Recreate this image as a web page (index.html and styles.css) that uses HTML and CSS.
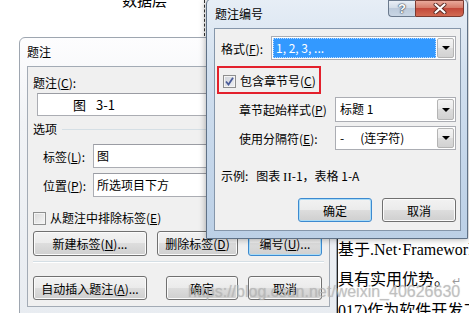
FILE: index.html
```html
<!DOCTYPE html>
<html>
<head>
    <meta charset="UTF-8">
    <meta name="viewport" content="width=device-width, initial-scale=1.0">
    <title>题注编号</title>
    <link rel="stylesheet" href="styles.css">
</head>
<body>
    <div class="desk">
        <!-- the Word document behind the dialogs -->
        <div class="doc-title">数据层</div>
        <div class="doc-dash"></div>
        <div class="doc-rule"></div>
        <div class="doc-text">
            <p>基于.Net·Framework</p>
            <p>具有实用优势。<span class="mark">↵</span></p>
            <p>017)作为软件开发工具</p>
        </div>

        <!-- 题注 dialog -->
        <div class="window win-caption">
            <div class="titlebar">题注</div>
            <div class="client">
                <div class="cap-label">题注(<u>C</u>):</div>
                <div class="textbox cap-box">图<span class="cap-num">3-1</span></div>
                <div class="group">选项<span class="group-line"></span></div>
                <div class="field">
                    <span class="field-label">标签(<u>L</u>):</span>
                    <div class="textbox">图</div>
                </div>
                <div class="field field-pos">
                    <span class="field-label">位置(<u>P</u>):</span>
                    <div class="textbox">所选项目下方</div>
                </div>
                <div class="check check-exclude">
                    <span class="box"></span>
                    <span>从题注中排除标签(<u>E</u>)</span>
                </div>
                <div class="btn-row">
                    <button class="btn w-wide">新建标签(<u>N</u>)...</button>
                    <button class="btn w-del">删除标签(<u>D</u>)</button>
                    <button class="btn w-std def">编号(<u>U</u>)...</button>
                </div>
                <div class="sep"></div>
                <div class="btn-row btn-row-last">
                    <button class="btn w-wide">自动插入题注(<u>A</u>)...</button>
                    <button class="btn w-ok">确定</button>
                    <button class="btn w-std">取消</button>
                </div>
            </div>
        </div>

        <!-- 题注编号 dialog -->
        <div class="window win-number">
            <div class="titlebar">题注编号</div>
            <div class="caption-btns">
                <div class="cb-help">?</div>
                <div class="cb-close">
                    <svg width="14" height="11" viewBox="0 0 14 11">
                        <path d="M2.5 1.5 L11.5 9.5 M11.5 1.5 L2.5 9.5" stroke="#5a2a24" stroke-width="4" stroke-linecap="round"/>
                        <path d="M2.5 1.5 L11.5 9.5 M11.5 1.5 L2.5 9.5" stroke="#fff" stroke-width="2.2" stroke-linecap="round"/>
                    </svg>
                </div>
            </div>
            <div class="client">
                <div class="row row-fmt">
                    <span class="row-label">格式(<u>F</u>):</span>
                    <div class="combo combo-fmt">
                        <div class="combo-value selected">1, 2, 3, ...</div>
                        <div class="combo-arrow"><i></i></div>
                    </div>
                </div>
                <div class="mark-box">
                    <div class="check">
                        <span class="box checked">
                            <svg width="11" height="11" viewBox="0 0 11 11">
                                <path d="M2 5.5 L4.5 8.5 L9 1.8" fill="none" stroke="#4a5c99" stroke-width="1.8"/>
                            </svg>
                        </span>
                        <span>包含章节号(<u>C</u>)</span>
                    </div>
                </div>
                <div class="row row-sub row-style">
                    <span class="row-label sub-label">章节起始样式(<u>P</u>)</span>
                    <div class="combo combo-sub">
                        <div class="combo-value">标题 1</div>
                        <div class="combo-arrow"><i></i></div>
                    </div>
                </div>
                <div class="row row-sub row-sepr">
                    <span class="row-label sub-label">使用分隔符(<u>E</u>):</span>
                    <div class="combo combo-sub">
                        <div class="combo-value">-<span class="dash-name">(连字符)</span></div>
                        <div class="combo-arrow"><i></i></div>
                    </div>
                </div>
                <div class="sample">示例:<span class="sample-text">图表 <span class="roman">II</span>-1，表格 1-A</span></div>
                <div class="btn-row btn-row-right">
                    <button class="btn w-std def">确定</button>
                    <button class="btn w-std">取消</button>
                </div>
            </div>
        </div>

        <div class="watermark">https://blog.csdn.net/weixin_40626630</div>
    </div>
</body>
</html>
```

FILE: styles.css
```css
* {
    box-sizing: border-box;
}
body {
    margin: 0;
    overflow: hidden;
    background: #fff;
    font-family: "Noto Sans CJK SC", sans-serif;
    font-size: 12px;
    color: #000;
}
.desk {
    position: relative;
    width: 469px;
    height: 313px;
    overflow: hidden;
}
u {
    text-decoration: underline;
    text-underline-offset: 1px;
}

/* document behind */
.doc-title {
    position: absolute;
    left: 122px;
    top: -7px;
    font: 15px/16px "Liberation Serif", "Noto Sans CJK SC", serif;
}
.doc-dash {
    position: absolute;
    left: 204px;
    top: 0;
    height: 36px;
    border-left: 1px dashed #333;
}
.doc-rule {
    position: absolute;
    left: 337px;
    top: 200px;
    bottom: 0;
    border-left: 1px solid #222;
}
.doc-text {
    position: absolute;
    left: 338px;
    top: 235px;
    font: 16px/30px "Liberation Serif", "Noto Sans CJK SC", serif;
    white-space: nowrap;
}
.doc-text p {
    margin: 0;
}
.mark {
    color: #999;
    font-size: 11px;
    margin-left: 2px;
}

/* windows */
.window {
    position: absolute;
    display: flex;
    flex-direction: column;
    border: 1px solid #7d8794;
    border-radius: 6px 6px 0 0;
}
.win-caption {
    left: 19px;
    top: 37px;
    width: 318px;
    height: 284px;
    background: linear-gradient(#fdfdfe, #f1f3f6 30%, #e8ecf1);
    border-color: #9ea6b0;
}
.win-number {
    left: 206px;
    top: -2px;
    width: 262px;
    height: 241px;
    background: linear-gradient(180deg, #e7eef6, #d2e0ef 30%, #c4d6ea 70%, #bcd0e6);
    border-color: #5f7186;
    box-shadow: 0 0 7px rgba(0, 0, 0, 0.35);
}
.titlebar {
    height: 28px;
    line-height: 28px;
    padding-left: 7px;
    white-space: nowrap;
}
.win-number .titlebar {
    height: 29px;
    line-height: 29px;
    padding-left: 8px;
}
.client {
    background: #f0f0f0;
    border: 1px solid #a3abb5;
    display: flex;
    flex-direction: column;
}
.win-caption .client {
    margin: 0 6px 0 7px;
    padding: 0 5px;
    height: 241px;
}
.win-number .client {
    margin: 0 6px 0 7px;
    padding: 0 4px 0 6px;
    height: 203px;
    border-color: #8596aa;
}

/* caption buttons */
.caption-btns {
    position: absolute;
    top: 1px;
    right: 3px;
    display: flex;
}
.cb-help,
.cb-close {
    height: 17px;
    display: flex;
    align-items: center;
    justify-content: center;
    border: 1px solid #6b7a8d;
}
.cb-help {
    width: 27px;
    border-right: none;
    border-radius: 0 0 0 4px;
    background: linear-gradient(#e9eff6, #d3dde8 45%, #bccadb 50%, #c9d6e4);
    color: #fff;
    font: bold 13px/1 "Liberation Sans", sans-serif;
    text-shadow: 0 0 1px #3d4a5a, 0 0 1px #3d4a5a, 0 0 2px #3d4a5a;
}
.cb-close {
    width: 49px;
    border-color: #7b3a30;
    border-radius: 0 0 4px 0;
    background: linear-gradient(#e9a99b, #d67b69 45%, #c3493a 50%, #d26a52);
}

/* form parts */
.textbox {
    flex: none;
    height: 24px;
    line-height: 22px;
    background: #fff;
    border: 1px solid #abadb3;
    border-top-color: #9a9ca3;
    padding-left: 3px;
    white-space: nowrap;
}
.cap-label {
    margin-top: 8px;
    line-height: 16px;
}
.cap-box {
    margin: 2px 0 0 4px;
    width: 300px;
    height: 23px;
    line-height: 21px;
    padding-left: 35px;
    font-size: 13px;
}
.cap-num {
    margin-left: 10px;
}
.group {
    display: flex;
    align-items: center;
    margin-top: 5px;
    line-height: 16px;
}
.group-line {
    flex: 1;
    margin-left: 5px;
    border-top: 1px solid #d5dfe5;
}
.field {
    display: flex;
    align-items: center;
    margin-top: 7px;
    padding-left: 10px;
}
.field-pos {
    margin-top: 5px;
}
.field-label {
    flex: none;
    width: 50px;
    white-space: nowrap;
}
.field .textbox {
    width: 240px;
}
.check {
    display: flex;
    align-items: center;
    line-height: 16px;
    white-space: nowrap;
}
.check-exclude {
    margin-top: 13px;
}
.box {
    flex: none;
    width: 13px;
    height: 13px;
    margin-right: 4px;
    border: 1px solid #8e8f8f;
    background: linear-gradient(135deg, #d9d9d9, #f6f6f6);
    box-shadow: inset 0 0 0 1px #f4f4f4;
    display: flex;
    align-items: center;
    justify-content: center;
}
.box.checked {
    background: linear-gradient(135deg, #cfd3da, #eef0f3);
}
.sep {
    margin-top: 5px;
    border-top: 1px solid #d5dfe5;
    border-bottom: 1px solid #fff;
}

/* buttons */
.btn-row {
    display: flex;
    margin-top: 5px;
}
.btn-row-last {
    margin-top: 13px;
}
.btn {
    flex: none;
    height: 25px;
    padding: 0;
    font: inherit;
    color: #000;
    border: 1px solid #707070;
    border-radius: 3px;
    background: linear-gradient(#f2f2f2, #ebebeb 49%, #dddddd 50%, #cfcfcf);
    box-shadow: inset 0 0 0 1px #fbfbfb;
    white-space: nowrap;
}
.btn + .btn {
    margin-left: 10px;
}
.btn-row-last .btn {
    height: 24px;
}
.btn.def {
    border-color: #3c8ad0;
    box-shadow: inset 0 0 0 1px #a9dbf6;
}
.w-wide {
    width: 114px;
}
.w-del {
    width: 81px;
}
.w-std {
    width: 74px;
}
.btn-row .w-ok {
    width: 72px;
    margin-left: 19px;
}

/* 题注编号 rows */
.row {
    display: flex;
    align-items: center;
}
.row-fmt {
    margin-top: 7px;
}
.row-label {
    flex: none;
    width: 50px;
    white-space: nowrap;
}
.sub-label {
    width: 114px;
    padding-left: 18px;
}
.row-style {
    margin-top: 3px;
}
.row-sepr {
    margin-top: 4px;
}
.combo {
    flex: none;
    display: flex;
    height: 24px;
    padding: 1px;
    background: #fff;
    border: 1px solid #abadb3;
}
.row-style .combo {
    height: 25px;
}
.combo-fmt {
    width: 185px;
}
.combo-sub {
    width: 121px;
}
.combo-value {
    flex: 1;
    padding-left: 3px;
    line-height: 20px;
    white-space: nowrap;
}
.combo-value.selected {
    background: #3399ff;
    color: #fff;
    outline: 1px dotted #b5d8ff;
    outline-offset: -1px;
    margin-right: 1px;
}
.combo-arrow {
    flex: none;
    width: 17px;
    border: 1px solid #b4b4b4;
    border-radius: 2px;
    background: linear-gradient(#f4f4f4, #e9e9e9 49%, #dcdcdc 50%, #d2d2d2);
    display: flex;
    align-items: center;
    justify-content: center;
}
.combo-arrow i {
    width: 0;
    height: 0;
    border-left: 4px solid transparent;
    border-right: 4px solid transparent;
    border-top: 4px solid #000;
}
.dash-name {
    margin-left: 16px;
}
.mark-box {
    align-self: flex-start;
    margin: 6px 0 0 -4px;
    height: 28px;
    border: 2px solid #e3202c;
    padding: 5px 3px 0 4px;
}
.sample {
    margin-top: 18px;
    line-height: 16px;
    white-space: nowrap;
}
.sample-text {
    margin-left: 8px;
}
.roman {
    font-family: "Liberation Serif", serif;
    font-size: 13px;
}
.btn-row-right {
    justify-content: flex-end;
    margin-top: 13px;
}
.btn-row-right .btn {
    height: 24px;
}

/* blog watermark over the shot */
.watermark {
    position: absolute;
    left: 188px;
    top: 284px;
    font: 16px/16px "Liberation Sans", sans-serif;
    color: rgba(185, 185, 185, 0.75);
    text-shadow: 0 0 1px rgba(120, 120, 120, 0.35);
    white-space: nowrap;
    pointer-events: none;
}
```
